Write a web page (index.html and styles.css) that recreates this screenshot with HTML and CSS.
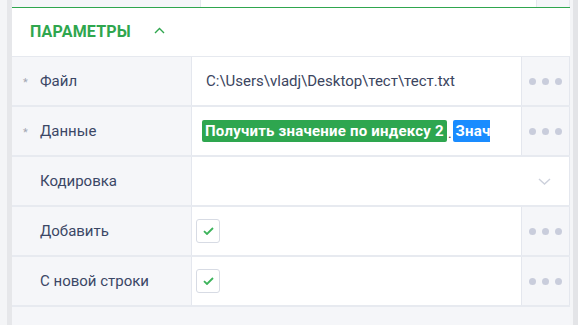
FILE: index.html
```html
<!DOCTYPE html>
<html>
<head>
<meta charset="utf-8">
<link rel="stylesheet" href="styles.css">
</head>
<body>
<div class="page">
  <div class="gutter"></div>
  <div class="edge"></div>
  <div class="panel">
    <div class="prev-row">
      <div class="prev-label"></div>
      <div class="prev-value"></div>
      <div class="prev-dots"></div>
    </div>
    <div class="section-head">
      <span class="section-title">ПАРАМЕТРЫ</span>
      <svg class="chev-up" width="11" height="7" viewBox="0 0 11 7"><path d="M1 6 L5.5 1.5 L10 6" fill="none" stroke="#2fa64e" stroke-width="1.4"/></svg>
    </div>
    <div class="table">
      <div class="row">
        <div class="label"><span class="req">*</span>Файл</div>
        <div class="value"><span class="text">C:\Users\vladj\Desktop\тест\тест.txt</span></div>
        <div class="dots"><i></i><i></i><i></i></div>
      </div>
      <div class="row">
        <div class="label"><span class="req">*</span>Данные</div>
        <div class="value value-tags">
          <div class="tags"><span class="tag tag-green">Получить значение по индексу 2</span><span class="sep">.</span><span class="tag tag-blue">Значение</span></div>
        </div>
        <div class="dots"><i></i><i></i><i></i></div>
      </div>
      <div class="row row-wide">
        <div class="label"><span class="req"></span>Кодировка</div>
        <div class="value value-select">
          <svg width="13" height="7" viewBox="0 0 13 7"><path d="M1 1 L6.5 6 L12 1" fill="none" stroke="#cdd1dc" stroke-width="1.4"/></svg>
        </div>
      </div>
      <div class="row">
        <div class="label"><span class="req"></span>Добавить</div>
        <div class="value value-check">
          <span class="checkbox"><svg width="11" height="8" viewBox="0 0 11 8"><path d="M1 4.2 L4 7 L10 1" fill="none" stroke="#3cb35a" stroke-width="1.8"/></svg></span>
        </div>
        <div class="dots"><i></i><i></i><i></i></div>
      </div>
      <div class="row">
        <div class="label"><span class="req"></span>С новой строки</div>
        <div class="value value-check">
          <span class="checkbox"><svg width="11" height="8" viewBox="0 0 11 8"><path d="M1 4.2 L4 7 L10 1" fill="none" stroke="#3cb35a" stroke-width="1.8"/></svg></span>
        </div>
        <div class="dots"><i></i><i></i><i></i></div>
      </div>
    </div>
  </div>
  <div class="gap"></div>
  <div class="scroll"></div>
</div>
</body>
</html>
```

FILE: styles.css
```css
* { box-sizing: border-box; }
html, body { margin: 0; padding: 0; }
body {
  font-family: Roboto, "Liberation Sans", sans-serif;
  background: #f5f6f8;
  width: 578px;
  height: 325px;
  overflow: hidden;
}
.page {
  display: flex;
  height: 325px;
}
.gutter { width: 7px; background: #f4f5f7; }
.edge { width: 5px; background: #e6e7ea; }
.panel {
  width: 558px;
  background: #f5f6f9;
  display: flex;
  flex-direction: column;
}
.gap { width: 3px; background: #f4f5f7; }
.scroll { width: 5px; background: #e3e4e7; }

.prev-row {
  height: 7px;
  display: grid;
  grid-template-columns: 188px 337px 33px;
}
.prev-label { background: #f5f6f9; }
.prev-value { background: #fff; border-left: 1px solid #e6e9ef; border-right: 1px solid #e6e9ef; }
.prev-dots { background: #f5f6f9; border-right: 1px solid #e6e9ef; }

.section-head {
  height: 50px;
  background: #fff;
  border-top: 1px solid #2fa64e;
  border-bottom: 1px solid #e6e9ef;
  display: flex;
  align-items: center;
  padding-left: 18px;
  padding-bottom: 1px;
}
.section-title {
  color: #2fa64e;
  font-weight: 700;
  font-size: 16px;
  letter-spacing: 0.2px;
}
.chev-up { margin-left: 23px; margin-top: -2px; }

.row {
  display: grid;
  grid-template-columns: 180px 330px 48px;
  height: 50px;
  border-bottom: 2px solid #e7eaf0;
}
.row-wide { grid-template-columns: 180px 378px; }
.label {
  background: #f5f6f9;
  border-right: 1px solid #e4e7ee;
  display: flex;
  align-items: center;
  padding-left: 11px;
  color: #3b4766;
  font-size: 15px;
}
.req {
  width: 17px;
  color: #a3a7b3;
  font-size: 11px;
  padding-top: 3px;
}
.value {
  background: #fff;
  border-right: 1px solid #e4e7ee;
  display: flex;
  align-items: center;
  overflow: hidden;
}
.value .text {
  padding-left: 14px;
  color: #3b4560;
  font-size: 15px;
  white-space: nowrap;
}
.value-tags { padding-left: 10px; }
.tags {
  width: 288px;
  overflow: hidden;
  white-space: nowrap;
  display: flex;
  align-items: center;
}
.tag {
  display: inline-block;
  height: 22px;
  line-height: 22px;
  padding: 0 3px;
  border-radius: 2px;
  color: #fff;
  font-weight: 700;
  font-size: 15px;
  letter-spacing: 0.22px;
  flex: none;
}
.tag-green { background: #2ea64f; }
.tag-blue { background: #1a8cff; border-radius: 2px 0 0 2px; }
.sep { color: #3b4560; font-size: 14px; padding: 0 1px; margin-top: 4px; }
.value-select { justify-content: flex-end; padding-right: 18px; padding-top: 1px; }
.value-check { padding-left: 4px; }
.checkbox {
  width: 24px;
  height: 24px;
  border: 1px solid #d7dbe4;
  border-radius: 3px;
  display: flex;
  align-items: center;
  justify-content: center;
  background: #fff;
}
.dots {
  background: #f5f6f9;
  border-right: 1px solid #e4e7ee;
  display: flex;
  align-items: center;
  justify-content: center;
  gap: 6px;
  padding-right: 1px;
}
.dots i {
  display: block;
  width: 7px;
  height: 7px;
  border-radius: 50%;
  background: #c9cddc;
}
```
